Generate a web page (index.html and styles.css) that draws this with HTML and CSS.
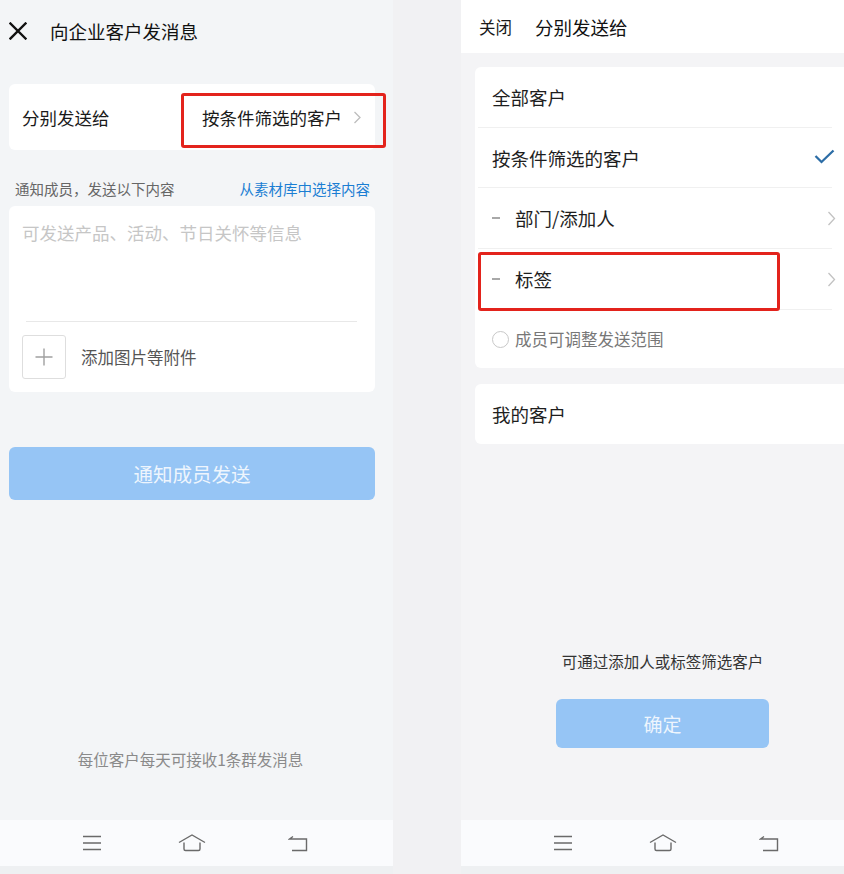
FILE: index.html
```html
<!DOCTYPE html>
<html lang="zh-CN">
<head>
<meta charset="utf-8">
<title>向企业客户发消息</title>
<link rel="stylesheet" href="styles.css">
</head>
<body>
<section class="phone phone-left">
  <header class="lhead">
    <svg class="close-x" width="18" height="18" viewBox="0 0 18 18"><path d="M1.5 1.5 L16.5 16.5 M16.5 1.5 L1.5 16.5" stroke="#111" stroke-width="2.4" fill="none" stroke-linecap="square"/></svg>
    <span class="ltitle">向企业客户发消息</span>
  </header>

  <div class="card send-to">
    <span class="send-label">分别发送给</span>
    <span class="send-value">按条件筛选的客户
      <svg class="chev" width="9" height="13" viewBox="0 0 9 13"><path d="M1.5 1 L7 6.5 L1.5 12" stroke="#bdbdbd" stroke-width="1.3" fill="none"/></svg>
    </span>
    <span class="mark mark-left"></span>
  </div>

  <div class="label-row">
    <span class="hint-label">通知成员，发送以下内容</span>
    <span class="link">从素材库中选择内容</span>
  </div>

  <div class="card compose-card">
    <div class="compose"><span class="placeholder">可发送产品、活动、节日关怀等信息</span></div>
    <div class="divider"></div>
    <div class="attach">
      <span class="plus-box">
        <svg width="18" height="18" viewBox="0 0 18 18"><path d="M9 0.5 V17.5 M0.5 9 H17.5" stroke="#a0a0a0" stroke-width="1.4"/></svg>
      </span>
      <span class="attach-text">添加图片等附件</span>
    </div>
  </div>

  <div class="btn btn-wide">通知成员发送</div>

  <p class="footnote">每位客户每天可接收1条群发消息</p>

  <nav class="navbar">
    <svg class="nav-menu" width="20" height="16" viewBox="0 0 20 16"><path d="M1 1.5 H19 M1 8 H19 M1 14.5 H19" stroke="#6a6a6a" stroke-width="1.3"/></svg>
    <svg class="nav-home" width="28" height="18" viewBox="0 0 28 18"><path d="M1 8.5 L14 1 L27 8.5 M6 8.5 V15 Q6 16.5 7.5 16.5 H20.5 Q22 16.5 22 15 V8.5" stroke="#6a6a6a" stroke-width="1.4" fill="none"/></svg>
    <svg class="nav-back" width="20" height="17" viewBox="0 0 20 17"><path d="M5 1.5 L1.5 4 H18.5 V15.5 H4" stroke="#6a6a6a" stroke-width="1.4" fill="none"/></svg>
  </nav>
  <div class="bottom-strip"></div>
</section>

<section class="phone phone-right">
  <header class="rhead">
    <span class="close-text">关闭</span>
    <span class="rtitle">分别发送给</span>
  </header>

  <div class="card list-card">
    <div class="row h61"><span>全部客户</span></div>
    <div class="row h60"><span>按条件筛选的客户</span>
      <svg class="check" width="21" height="15" viewBox="0 0 21 15"><path d="M1.5 7 L7.5 13 L19.5 1.5" stroke="#2c6da6" stroke-width="2.3" fill="none"/></svg>
    </div>
    <div class="row h61"><span class="sub"><i class="dash"></i>部门/添加人</span>
      <svg class="chev-r" width="9" height="15" viewBox="0 0 9 15"><path d="M1.5 1 L7.5 7.5 L1.5 14" stroke="#c2c2c2" stroke-width="1.3" fill="none"/></svg>
    </div>
    <div class="row h61 tag-row"><span class="sub"><i class="dash"></i>标签</span>
      <svg class="chev-r" width="9" height="15" viewBox="0 0 9 15"><path d="M1.5 1 L7.5 7.5 L1.5 14" stroke="#c2c2c2" stroke-width="1.3" fill="none"/></svg>
      <span class="mark mark-right"></span>
    </div>
    <div class="row radio-row"><span class="radio"></span><span class="radio-text">成员可调整发送范围</span></div>
  </div>

  <div class="card mine-card">我的客户</div>

  <p class="filter-hint">可通过添加人或标签筛选客户</p>
  <div class="btn btn-ok">确定</div>

  <nav class="navbar">
    <svg class="nav-menu" width="20" height="16" viewBox="0 0 20 16"><path d="M1 1.5 H19 M1 8 H19 M1 14.5 H19" stroke="#6a6a6a" stroke-width="1.3"/></svg>
    <svg class="nav-home" width="28" height="18" viewBox="0 0 28 18"><path d="M1 8.5 L14 1 L27 8.5 M6 8.5 V15 Q6 16.5 7.5 16.5 H20.5 Q22 16.5 22 15 V8.5" stroke="#6a6a6a" stroke-width="1.4" fill="none"/></svg>
    <svg class="nav-back" width="20" height="17" viewBox="0 0 20 17"><path d="M5 1.5 L1.5 4 H18.5 V15.5 H4" stroke="#6a6a6a" stroke-width="1.4" fill="none"/></svg>
  </nav>
  <div class="bottom-strip"></div>
</section>
</body>
</html>
```

FILE: styles.css
```css
* { box-sizing: border-box; }
html, body { margin: 0; padding: 0; }
body {
  width: 844px;
  height: 874px;
  overflow: hidden;
  display: flex;
  gap: 68px;
  background: #f1f1f3;
  font-family: "Noto Sans CJK SC", "Noto Sans", sans-serif;
  color: #222;
}
.phone {
  width: 403px;
  height: 874px;
  flex-shrink: 0;
  display: flex;
  flex-direction: column;
}
.phone-left { margin-left: -10px; background: #f3f5f7; }
.phone-right { background: #f4f4f6; }

.card { background: #fff; border-radius: 6px; }

/* left screen */
.lhead {
  height: 62px;
  display: flex;
  align-items: center;
  padding-left: 19px;
}
.close-x { display: block; }
.ltitle { margin-left: 23px; font-size: 18.5px; color: #111; line-height: 24px; }

.send-to {
  position: relative;
  margin: 22px 18px 0 19px;
  height: 66px;
  padding: 0 13px;
  display: flex;
  align-items: center;
  justify-content: space-between;
}
.send-label { font-size: 17.5px; color: #1a1a1a; }
.send-value { font-size: 17.5px; color: #1a1a1a; display: flex; align-items: center; }
.chev { margin-left: 11px; }

.mark {
  position: absolute;
  border: 3px solid #e3231c;
  border-radius: 3px;
}
.mark-left { left: 172px; top: 9px; width: 205px; height: 55px; }

.label-row {
  margin: 26px 23px 0 25px;
  height: 24px;
  display: flex;
  align-items: center;
  justify-content: space-between;
  font-size: 14.5px;
}
.hint-label { color: #666; }
.link { color: #1b7ed3; }

.compose-card { margin: 6px 18px 0 19px; }
.compose { height: 115px; padding: 15px 13px 0; }
.placeholder { font-size: 17.5px; line-height: 22px; color: #c6c6c6; }
.divider { margin: 0 18px 0 17px; height: 1px; background: #e8e8e8; }
.attach { padding: 13px; display: flex; align-items: center; }
.plus-box {
  width: 44px; height: 44px;
  border: 1px solid #dedede;
  border-radius: 3px;
  display: flex; align-items: center; justify-content: center;
}
.attach-text { margin-left: 15px; font-size: 16.5px; color: #555; }

.btn {
  background: #96c5f5;
  border-radius: 6px;
  color: rgba(255, 255, 255, 0.85);
  display: flex;
  align-items: center;
  justify-content: center;
}
.btn-wide { margin: 55px 18px 0 19px; height: 53px; font-size: 19.5px; }

.footnote {
  margin: 248px 0 0;
  text-align: center;
  font-size: 15.5px;
  line-height: 22px;
  color: #8a8a8a;
  padding-right: 2px;
}

.navbar {
  margin-top: auto;
  height: 46px;
  background: #fafbfd;
  display: flex;
  align-items: center;
  padding-left: 92px;
}
.nav-menu { margin-right: 76px; }
.nav-home { margin-right: 82px; }
.bottom-strip { height: 8px; background: #eef0f2; }

/* right screen */
.rhead {
  height: 53px;
  background: #fff;
  display: flex;
  align-items: center;
  padding-left: 18px;
}
.close-text { font-size: 16.5px; color: #1a1a1a; }
.rtitle { margin-left: 23px; font-size: 18.5px; color: #111; }

.list-card { margin: 14px 14px 0; }
.row {
  position: relative;
  margin: 0 18px 0 3px;
  padding-left: 14px;
  border-bottom: 1px solid #f0f0f0;
  display: flex;
  align-items: center;
  justify-content: space-between;
  font-size: 18.5px;
  color: #1e1e1e;
}
.h61 { height: 61px; }
.h60 { height: 60px; }
.check { margin-right: -3px; margin-top: -2px; }
.chev-r { margin-right: -4px; }
.sub { display: flex; align-items: center; }
.dash { display: block; width: 8px; height: 1.5px; background: #a8a8a8; margin-right: 15px; }
.mark-right { left: 0; top: 3px; width: 302px; height: 59px; }
.radio-row { height: 58px; border-bottom: none; justify-content: flex-start; }
.radio {
  width: 17px; height: 17px;
  border: 1px solid #c8c8c8;
  border-radius: 50%;
  margin-right: 6px;
}
.radio-text { font-size: 16.5px; color: #777; }

.mine-card {
  margin: 16px 14px 0;
  height: 60px;
  padding-left: 17px;
  display: flex;
  align-items: center;
  font-size: 18.5px;
  color: #1e1e1e;
}

.filter-hint {
  margin: 206px 0 0;
  text-align: center;
  font-size: 15.5px;
  line-height: 22px;
  color: #333;
}
.btn-ok { margin: 27px auto 0; width: 213px; height: 49px; font-size: 19px; }
```
